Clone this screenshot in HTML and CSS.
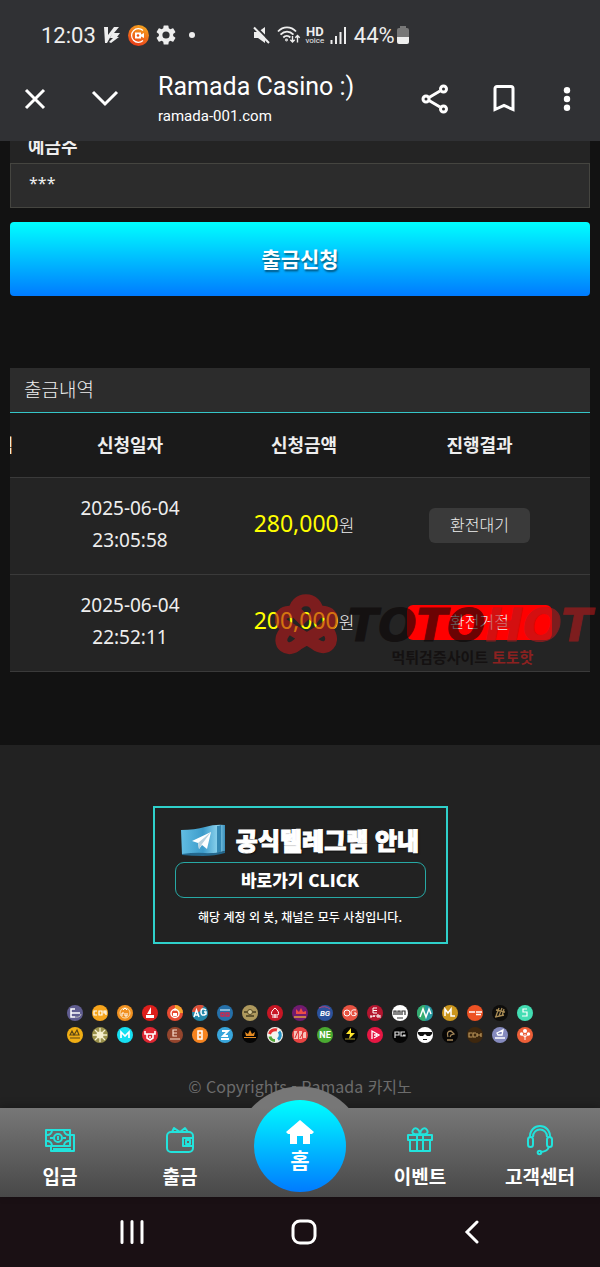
FILE: index.html
```html
<!DOCTYPE html>
<html lang="ko">
<head>
<meta charset="utf-8">
<meta name="viewport" content="width=device-width, initial-scale=1">
<title>Ramada Casino :)</title>
<link rel="stylesheet" href="styles.css">
</head>
<body>
<header class="browser">
  <div class="status">
    <span class="status-text">12:03</span>
    <svg class="status-v" width="17" height="18" viewBox="0 0 17 18" fill="#eee"><path d="M0 1h4v8l6-8h5l-5 6h6l-3 4h2l-8 6-2-1 4-4H6l2-4-5 9H1z"/></svg>
    <svg class="status-rec" width="21" height="21" viewBox="0 0 21 21"><defs><linearGradient id="rec" x1="0.7" y1="0" x2="0.3" y2="1"><stop offset="0" stop-color="#f5a51d"/><stop offset="1" stop-color="#e93a1a"/></linearGradient></defs><circle cx="10.500" cy="10.500" r="10.500" fill="url(#rec)"/><path d="M15 5.500A6.800 6.800 0 1 0 15 15.500" fill="none" stroke="#fff" stroke-width="1.200"/><path d="M7 7.500h6v2l3-1.500v5l-3-1.500v2H7z" fill="#fff"/><circle cx="10" cy="10.500" r="1.300" fill="#e8501a"/></svg>
    <svg class="status-gear" width="20" height="20" viewBox="2 2 20 20" fill="#eee"><path d="M19.140 12.940c.04-.3.06-.61.06-.94s-.02-.64-.07-.94l2.030-1.580a.5.5 0 0 0 .12-.61l-1.920-3.320a.49.49 0 0 0-.59-.22l-2.390.96a7 7 0 0 0-1.620-.94L14.400 2.810a.48.48 0 0 0-.48-.41h-3.840a.47.47 0 0 0-.47.41l-.36 2.540c-.59.24-1.130.57-1.620.94l-2.390-.96a.48.48 0 0 0-.59.22L2.740 8.870a.47.47 0 0 0 .12.61l2.030 1.580a7 7 0 0 0 0 1.880l-2.030 1.580a.5.5 0 0 0-.12.61l1.920 3.320c.12.22.37.29.59.22l2.390-.96c.5.38 1.030.7 1.620.94l.36 2.540c.05.24.24.41.48.41h3.840c.24 0 .44-.17.47-.41l.36-2.540a7 7 0 0 0 1.620-.94l2.390.96c.22.08.47 0 .59-.22l1.920-3.320a.47.47 0 0 0-.12-.61zM12 15.600A3.600 3.600 0 1 1 12 8.400a3.600 3.600 0 0 1 0 7.200z"/></svg>
    <svg class="status-dot" width="6" height="6" viewBox="0 0 6 6"><circle cx="3" cy="3" r="3" fill="#eee"/></svg>
    <svg class="status-mute" width="18" height="18" viewBox="0 0 18 18"><path d="M1 6h4l7-5v16l-7-5H1z" fill="#eee"/><path d="M2 0l16 16" stroke="#303134" stroke-width="2"/><path d="M1 1.500L16 17" stroke="#eee" stroke-width="2"/></svg>
    <svg class="status-wifi" width="24" height="18" viewBox="0 0 24 18" fill="none" stroke="#eee" stroke-width="1.800"><path d="M1 5.500c5-5.500 13-5.500 18 0M3.500 8.700c4-4 9-4 13 0M6.300 11.500c2-2 5-2 7 0"/><circle cx="9.500" cy="14" r="0.500"/><path d="M15.500 10v6M13.300 13.800l2.200 2.200 2.200-2.200M20.500 16.500v-7M18.300 11.700l2.200-2.200 2.200 2.200" stroke-width="1.400"/></svg>
    <span class="hd"><b>HD</b><small>voice</small></span>
    <svg class="status-signal" width="16" height="17" viewBox="0 0 16 17" stroke="#eee" stroke-width="2"><path d="M1.500 17v-4M6 17V9M10.500 17V5M15 17V0"/></svg>
    <span class="status-text">44%</span>
    <svg class="status-battery" width="12" height="18" viewBox="0 0 12 18"><path d="M3 0h6v2h1a2 2 0 0 1 2 2v8H0V4a2 2 0 0 1 2-2h1z" fill="#777"/><path d="M0 11h12v5a2 2 0 0 1-2 2H2a2 2 0 0 1-2-2z" fill="#eee"/></svg>
  </div>
  <div class="toolbar">
    <button class="tool close" aria-label="닫기"><svg width="22" height="22" viewBox="0 0 22 22"><path d="M2 2l18 18M20 2L2 20"/></svg></button>
    <button class="tool collapse" aria-label="접기"><svg width="28" height="18" viewBox="0 0 28 18"><path d="M2 2l12 12L26 2"/></svg></button>
    <div class="site">
      <div class="site-title">Ramada Casino :)</div>
      <div class="site-url">ramada-001.com</div>
    </div>
    <button class="tool share" aria-label="공유"><svg width="28" height="30" viewBox="0 0 28 30"><path d="M8 13.500L19 7M8 16.500L19 23"/><circle cx="5" cy="15" r="3"/><circle cx="22.500" cy="5" r="3"/><circle cx="22.500" cy="25" r="3"/></svg></button>
    <button class="tool bookmark" aria-label="북마크"><svg width="22" height="27" viewBox="0 0 22 27"><path d="M2 24.500V3.500a2 2 0 0 1 2-2h14a2 2 0 0 1 2 2v21l-9-4z"/></svg></button>
    <button class="tool more" aria-label="더보기"><svg width="8" height="24" viewBox="0 0 8 24"><g fill="#fff" stroke="none"><circle cx="4" cy="3.200" r="3.200"/><circle cx="4" cy="12" r="3.200"/><circle cx="4" cy="20.800" r="3.200"/></g></svg></button>
  </div>
</header>

<main class="content">
  <form class="withdraw">
    <div class="field-head"><label for="holder">예금주</label></div>
    <input class="field" id="holder" type="text" value="***" readonly>
    <button class="submit" type="button">출금신청</button>
  </form>

  <section class="history">
    <h2 class="history-title">출금내역</h2>
    <table class="history-table">
      <colgroup><col class="col-edge"><col class="col-main"><col class="col-main"><col></colgroup>
      <thead>
        <tr><th><span class="cut">내역</span></th><th>신청일자</th><th>신청금액</th><th>진행결과</th></tr>
      </thead>
      <tbody>
        <tr><td></td><td>2025-06-04<br>23:05:58</td><td><span class="amount">280,000</span><span class="won">원</span></td><td><span class="state">환전대기</span></td></tr>
        <tr><td></td><td>2025-06-04<br>22:52:11</td><td><span class="amount">200,000</span><span class="won">원</span></td><td><span class="state rejected">환전거절</span></td></tr>
      </tbody>
    </table>
    <div class="watermark">
      <svg width="62" height="62" viewBox="0 0 62 62" fill="none" stroke="#b8191b"><path stroke-width="12" d="M20 19C18 2 44 2 42 19L36 27M42 19c14-5 20 8 10 14L23 50C13 60 1 50 9 39l6-9M20 19C8 14-1 26 11 32l29 18c12 9 21-3 13-13l-7-8M21 18l10 10"/></svg>
      <div class="watermark-text">
        <div class="watermark-name">TOTO<em>HOT</em></div>
        <div class="watermark-sub">먹튀검증사이트 <em>토토핫</em></div>
      </div>
    </div>
  </section>
</main>

<footer class="footer">
  <div class="banner">
    <div class="banner-title">
      <svg width="45" height="32" viewBox="0 0 45 32"><defs><linearGradient id="flag"><stop offset="0" stop-color="#62bde3"/><stop offset="0.5" stop-color="#3d9ccb"/><stop offset="0.85" stop-color="#8ed4ee"/><stop offset="1" stop-color="#388db9"/></linearGradient></defs><path d="M0 6Q14 6 24 3T44 1v26q-10 3-22 3T1 31z" fill="url(#flag)"/><path d="M36 2q3 0 4-1v27l-4 1z" fill="#3387b2"/><path d="M1 30q14-2 23-1t20-2v2q-10 3-22 3T1 31z" fill="#24688e"/><path d="M11 17L30 8l-4 17-5-4-3 4-1-6z" fill="#fff"/><path d="M17 19L30 8l-9 12-3 5z" fill="#b9d2df"/></svg>
      <span>공식텔레그램 안내</span>
    </div>
    <button class="banner-link">바로가기 CLICK</button>
    <p class="banner-note">해당 계정 외 봇, 채널은 모두 사칭입니다.</p>
  </div>

  <div class="vendors">
    <svg viewBox="0 0 16 16"><circle cx="8" cy="8" r="8" fill="#605d90"/><path d="M8 4H4v8h4M4 8h9" stroke="#fff" stroke-width="1.500" fill="none"/><path d="M8 12q5 1 6-3" stroke="#bbb" fill="none"/></svg>
    <svg viewBox="0 0 16 16"><circle cx="8" cy="8" r="8" fill="#f7a51c"/><path d="M5 6H2v4h3M7 6h3v4H7zM14 10V6h-2v2h2" fill="none" stroke="#fff" stroke-width="1.200"/></svg>
    <svg viewBox="0 0 16 16"><circle cx="8" cy="8" r="8" fill="#f19120"/><circle cx="8" cy="8" r="5" fill="none" stroke="#fbe0b0"/><path d="M5 11V8h2M8 8v3h2V8M6 5l2-2 2 2" stroke="#fff" fill="none"/></svg>
    <svg viewBox="0 0 16 16"><circle cx="8" cy="8" r="8" fill="#de1f1c"/><path d="M9 2v7H5zM4 10h8v3H4z" fill="#fff"/></svg>
    <svg viewBox="0 0 16 16"><circle cx="8" cy="8" r="8" fill="#e84a31"/><path d="M8 0a8 8 0 0 1 8 8h-4L8 4z" fill="#f5a52c"/><circle cx="8" cy="8.500" r="4" fill="none" stroke="#fff" stroke-width="1.500"/><path d="M6 8h4v3H6zM7.500 3h1v3h-1z" fill="#fff"/></svg>
    <svg viewBox="0 0 16 16"><circle cx="8" cy="8" r="8" fill="#2488aa"/><path d="M0 7a8 8 0 0 1 12-6l-5 6z" fill="#df5038"/><path d="M2 12l2.500-7L7 12M3 10h3M14 5q-5-3-5 2t5 2V7h-2" fill="none" stroke="#fff" stroke-width="1.500"/></svg>
    <svg viewBox="0 0 16 16"><circle cx="8" cy="8" r="8" fill="#2570a9"/><path d="M3 5h10" stroke="#a9d1e8" stroke-width="1.500"/><path d="M4 8h3v3H4zM9 8h3v3H9z" fill="none" stroke="#d2254c" stroke-width="1.300"/></svg>
    <svg viewBox="0 0 16 16"><circle cx="8" cy="8" r="8" fill="#ae995d"/><path d="M2 7h12M4 11h8" stroke="#463c20" stroke-width="1.300"/><circle cx="8" cy="7" r="2.500" fill="#d7c996" stroke="#5a4b25"/></svg>
    <svg viewBox="0 0 16 16"><circle cx="8" cy="8" r="8" fill="#c71624"/><path d="M8 3q5 4 3 7H5Q3 7 8 3zM8 9v4M5 12h6" stroke="#fff" fill="none"/></svg>
    <svg viewBox="0 0 16 16"><circle cx="8" cy="8" r="8" fill="#711b70"/><path d="M4 9V4l3 3 2-4 2 4 3-1v3z" fill="#ed4c46"/><path d="M2 12h12" stroke="#e5a13a" stroke-width="1.500"/></svg>
    <svg viewBox="0 0 16 16"><circle cx="8" cy="8" r="8" fill="#2b529c"/><path d="M2 3q6-3 11 1" stroke="#b74276" fill="none"/><text x="8" y="11" font-size="8" font-style="italic">BG</text></svg>
    <svg viewBox="0 0 16 16"><circle cx="8" cy="8" r="8" fill="#e85342"/><circle cx="5" cy="8" r="3" fill="none" stroke="#fff"/><path d="M14 5q-5-1-5 3t5 2V8h-2" fill="none" stroke="#fff"/></svg>
    <svg viewBox="0 0 16 16"><circle cx="8" cy="8" r="8" fill="#b5152f"/><path d="M10 3H6v5h4M6 5.500h4M3 11h2v1H3M6 10l1 2 1-2M10 10h2v2h-2zM13 10v3" fill="none" stroke="#fff"/></svg>
    <svg viewBox="0 0 16 16"><circle cx="8" cy="8" r="8" fill="#fff"/><path d="M2 10V6h2v4M6 10V6h2v4M10 10V6h3v4M5 13h6" stroke="#333" fill="none" stroke-width="1.200"/></svg>
    <svg viewBox="0 0 16 16"><circle cx="8" cy="8" r="8" fill="#2799a0"/><path d="M0 8a8 8 0 0 1 8-8v16a8 8 0 0 1-8-8z" fill="#35ad6f"/><path d="M3 12L6 4l3 8 3-8 2 5" stroke="#fff" stroke-width="1.500" fill="none"/></svg>
    <svg viewBox="0 0 16 16"><circle cx="8" cy="8" r="8" fill="#cb961d"/><path d="M3 11V4l3 4 3-4v7h4" stroke="#fff" stroke-width="1.500" fill="none"/></svg>
    <svg viewBox="0 0 16 16"><circle cx="8" cy="8" r="8" fill="#ed5224"/><path d="M2 7h6M9 7h6M9 9.500h5" stroke="#fff" stroke-width="1.400"/></svg>
    <svg viewBox="0 0 16 16"><circle cx="8" cy="8" r="8" fill="#0e0d0b"/><path d="M4 11l3-8M7 11l3-8M10 11l2-7M4 5l9 2M3 12l9-2" stroke="#a98c55" stroke-width="1.300"/></svg>
    <svg viewBox="0 0 16 16"><circle cx="8" cy="8" r="8" fill="#43ddb3"/><path d="M10 4H6v3h4v4H5" stroke="#fff" stroke-width="1.200" fill="none"/></svg>

    <svg viewBox="0 0 16 16"><circle cx="8" cy="8" r="8" fill="#f0ae14"/><path d="M3 8l2-4 2 4 3-5 2 5H4zM3 11h10" stroke="#594514" fill="none" stroke-width="1.200"/></svg>
    <svg viewBox="0 0 16 16"><circle cx="8" cy="8" r="8" fill="#9a914b"/><path d="M8 1v14M1 8h14M3 3l10 10M13 3L3 13" stroke="#f5efd1" stroke-width="1.300"/><circle cx="8" cy="8" r="3.500" fill="#f6efce"/></svg>
    <svg viewBox="0 0 16 16"><circle cx="8" cy="8" r="8" fill="#16dff1"/><path d="M4 11V5l4 4 4-4v6" stroke="#fff" stroke-width="1.700" fill="none"/></svg>
    <svg viewBox="0 0 16 16"><circle cx="8" cy="8" r="8" fill="#df2732"/><path d="M3 4v3h10V4M5 7v4l3 2 3-2V7M7 10h2" fill="none" stroke="#fff" stroke-width="1.600"/></svg>
    <svg viewBox="0 0 16 16"><circle cx="8" cy="8" r="8" fill="#94452d"/><path d="M10 3H6v6h4M6 6h4M3 12h10" stroke="#f8ddce" stroke-width="1.200" fill="none"/></svg>
    <svg viewBox="0 0 16 16"><circle cx="8" cy="8" r="8" fill="#f68420"/><path d="M6 4h4v8H6z" stroke="#fff" stroke-width="1.500" fill="none"/><circle cx="8" cy="8" r="1" fill="#fff"/></svg>
    <svg viewBox="0 0 16 16"><circle cx="8" cy="8" r="8" fill="#39a6dc"/><path d="M5 4h6L6 9h5M4 12h8" stroke="#fff" stroke-width="1.800" fill="none"/></svg>
    <svg viewBox="0 0 16 16"><circle cx="8" cy="8" r="8" fill="#050505"/><path d="M3 5l3 2 2-4 2 4 3-2-1 4H4zM2 10h12v1H2z" fill="#e58b22"/></svg>
    <svg viewBox="0 0 16 16"><circle cx="8" cy="8" r="8" fill="#f4f4ed"/><path d="M2.500 7A6 6 0 0 1 10 3" stroke="#e73131" stroke-width="3" fill="none"/><path d="M12 4.500a5.500 5.500 0 0 1-1 8" stroke="#2794c8" stroke-width="3" fill="none"/><path d="M3 9.500q1 4 5 4" stroke="#51a536" stroke-width="3" fill="none"/></svg>
    <svg viewBox="0 0 16 16"><circle cx="8" cy="8" r="8" fill="#e94442"/><path d="M2 4h4v8H2zM7 4h3v8H7zM11 5h3v6h-3z" fill="#f7c1b9"/><path d="M3 11l3-7M8 11l4-7" stroke="#d52b30"/></svg>
    <svg viewBox="0 0 16 16"><circle cx="8" cy="8" r="8" fill="#4aaa31"/><text x="8" y="11" font-size="9">NE</text></svg>
    <svg viewBox="0 0 16 16"><circle cx="8" cy="8" r="8" fill="#050505"/><path d="M9 1L4 7h4l-1 5 6-6H9z" fill="#ffe52c"/><path d="M3 12h10" stroke="#a7992a"/></svg>
    <svg viewBox="0 0 16 16"><circle cx="8" cy="8" r="8" fill="#e61743"/><path d="M5 12V4l7 4-5 3M7 8h3" stroke="#fff" stroke-width="1.300" fill="none"/></svg>
    <svg viewBox="0 0 16 16"><circle cx="8" cy="8" r="8" fill="#050505"/><path d="M3 11V5h4v3H3M13 5H9v4h4V8h-2" stroke="#ddd" stroke-width="1.200" fill="none"/></svg>
    <svg viewBox="0 0 16 16"><circle cx="8" cy="8" r="8" fill="#fff"/><path d="M1 5h14v2l-2 2h-3L8 7 6 9H3L1 7zM6 12h4v1H6z" fill="#111"/></svg>
    <svg viewBox="0 0 16 16"><circle cx="8" cy="8" r="8" fill="#080706"/><path d="M6 10Q4 4 9 4l3 3-3 1-1 2M5 13h6" stroke="#a28558" stroke-width="1.300" fill="none"/></svg>
    <svg viewBox="0 0 16 16"><circle cx="8" cy="8" r="8" fill="#3e270e"/><path d="M5 6H2v4h3M9 6H6v4h3M10 6v4M14 6v4M10 8h4" stroke="#bd975b" stroke-width="1.200" fill="none"/></svg>
    <svg viewBox="0 0 16 16"><circle cx="8" cy="8" r="8" fill="#858abe"/><path d="M5 6l6-3-1 5H6zM3 11h10" stroke="#fff" stroke-width="1.300" fill="none"/></svg>
    <svg viewBox="0 0 16 16"><circle cx="8" cy="8" r="8" fill="#ed5f38"/><path d="M8 13V7M8 10L4 7M8 10l4-3" stroke="#fff"/><circle cx="8" cy="4" r="2" fill="#fff"/><circle cx="4.500" cy="7" r="1.700" fill="#fff"/><circle cx="11.500" cy="7" r="1.700" fill="#fff"/></svg>
  </div>
  <p class="copyright">© Copyrights - Ramada 카지노</p>
</footer>

<nav class="tabs">
  <a class="tab" href="#"><svg width="32" height="26" viewBox="0 0 32 26"><path d="M2 3h24v16H2zM27 8h3v16H7v-4"/><circle cx="14" cy="11" r="4"/><path d="M14 9v4M3 8q4 0 5-4M20 4q1 4 5 4M3 14q4 0 5 4M20 18q1-4 5-4M9 22h18M6 11h3M19 11h3"/></svg><span>입금</span></a>
  <a class="tab" href="#"><svg width="30" height="28" viewBox="0 0 30 28"><rect x="2" y="6" width="26" height="20" rx="4"/><path d="M7 6l2-4 6 4 5-4 3 4M27 12h-9v8h9M21 14h4v4h-4z"/></svg><span>출금</span></a>
  <a class="home" href="#"><svg width="28" height="24" viewBox="0 0 28 24"><path d="M14 0l14 12-2 2h-2v10h-7v-8h-6v8H4V14H2l-2-2z" fill="#fff"/></svg><span>홈</span></a>
  <a class="tab" href="#"><svg width="28" height="28" viewBox="0 0 28 28"><path d="M2 9h24v5H2zM4 14v11h20V14M11 9v16M17 9v16"/><path d="M14 8C8 9 5 7 7 4s6-2 7 4zM14 8c6 1 9-1 7-4s-6-2-7 4z"/></svg><span>이벤트</span></a>
  <a class="tab" href="#"><svg width="28" height="32" viewBox="0 0 28 32"><path d="M4 14C3-2 25-2 24 14M7 13C7 3 21 3 21 13"/><rect x="2" y="13" width="5" height="10" rx="2.500"/><rect x="21" y="13" width="5" height="10" rx="2.500"/><path d="M23 23q-2 5-9 5"/><circle cx="13.500" cy="28.500" r="1.800"/></svg><span>고객센터</span></a>
</nav>

<div class="system">
  <button aria-label="최근 앱"><svg width="24" height="24" viewBox="0 0 24 24"><path d="M2 1.500v21M12 1.500v21M22 1.500v21"/></svg></button>
  <button aria-label="홈 화면"><svg width="26" height="26" viewBox="0 0 26 26"><rect x="2" y="2" width="22" height="22" rx="7"/></svg></button>
  <button aria-label="뒤로"><svg width="16" height="24" viewBox="0 0 16 24"><path d="M13 2L3 12l10 10"/></svg></button>
</div>
</body>
</html>
```
FILE: styles.css
```css
* { box-sizing: border-box; }

body {
  margin: 0;
  min-height: 100vh;
  background: #121212;
  color: #eee;
  font-family: "Noto Sans", "Noto Sans CJK KR", sans-serif;
}

button {
  padding: 0;
  border: 0;
  background: none;
  color: inherit;
  font-family: inherit;
}

svg { flex: none; display: block; }
em { font-style: inherit; }

/* Browser chrome */
.browser {
  background: #303134;
  font-family: Roboto, sans-serif;
  padding: 19px 29px 0 24px;
}

.status {
  display: flex;
  align-items: center;
  height: 32px;
  padding-left: 17px;
}

.status-text { font-size: 22px; color: #eee; }
.status-v { margin-left: 8px; }
.status-rec { margin-left: 7px; }
.status-gear { margin-left: 7px; }
.status-dot { margin-left: 13px; }
.status-mute { margin-left: 58px; }
.status-wifi { margin-left: 6px; }
.status-signal { margin: 0 8px 0 5px; }
.status-battery { margin-left: 2px; }

.hd {
  display: flex;
  flex-direction: column;
  align-items: center;
  width: 20px;
  margin-left: 4px;
}
.hd b { font-size: 13px; line-height: 10px; }
.hd small { font-size: 8px; line-height: 7px; }

.toolbar {
  display: flex;
  align-items: center;
  height: 90px;
  padding-top: 5px;
}

.tool { flex: none; }
.tool svg {
  fill: none;
  stroke: #fff;
  stroke-width: 3;
}
.collapse { margin-left: 45px; }
.site { flex: 1; margin-left: 39px; padding-top: 3px; color: #fff; }
.site-title { font-size: 25px; line-height: 32px; }
.site-url { font-size: 15px; line-height: 26px; }
.bookmark { margin-left: 44px; }
.more { margin-left: 48px; }

/* Withdrawal form */
.content { padding: 0 10px 73px; }

.field-head {
  display: flex;
  align-items: flex-end;
  height: 22px;
  padding-left: 18px;
  overflow: hidden;
  background: #242424;
  font-size: 18px;
  font-weight: 700;
  line-height: 34px;
}

.field {
  display: block;
  width: 100%;
  height: 45px;
  padding: 0 18px 6px;
  border: 1px solid #454540;
  background: #2c2c2c;
  color: #eee;
  font-family: inherit;
  font-size: 16px;
}

.submit {
  display: block;
  width: 100%;
  height: 74px;
  margin-top: 14px;
  padding-bottom: 2px;
  border-radius: 4px;
  background: linear-gradient(#00ffff, #007bff);
  color: #fff;
  font-size: 21px;
  font-weight: 700;
  text-shadow: 1px 2px 2px rgba(0, 0, 0, 0.5);
}

/* History */
.history { position: relative; margin-top: 72px; }

.history-title {
  margin: 0;
  padding-left: 14px;
  border-bottom: 1px solid #35c6c8;
  background: #2c2c2c;
  font-size: 19px;
  font-weight: 300;
  line-height: 44px;
}

.history-table {
  width: 100%;
  table-layout: fixed;
  border-collapse: collapse;
  font-size: 19px;
  line-height: 32px;
  text-align: center;
}
.history-table th, .history-table td {
  padding: 0;
  border-bottom: 1px solid #3a3a3a;
}
.history-table th {
  height: 64px;
  background: #1a1a1a;
  font-size: 18px;
}
.history-table td {
  height: 97px;
  padding-bottom: 3px;
  background: #242424;
}
.history-table tr > :last-child { padding-right: 22px; padding-bottom: 0; }
.col-edge { width: 33px; }
.col-main { width: 30%; }

.cut {
  display: flex;
  justify-content: flex-end;
  width: 3px;
  overflow: hidden;
  white-space: nowrap;
}

.amount { color: #ff0; font-size: 23px; }
.won { font-size: 17px; font-weight: 300; }

.state {
  display: inline-block;
  padding: 0 21px;
  border-radius: 6px;
  background: #3a3a3a;
  font-size: 16px;
  font-weight: 300;
  line-height: 35px;
}
.rejected { padding: 0 43px; background: #f00; }

.watermark {
  position: absolute;
  right: -2px;
  bottom: -8px;
  display: flex;
  align-items: center;
  gap: 10px;
  opacity: 0.6;
  pointer-events: none;
}
.watermark svg { margin-bottom: 24px; }
.watermark-name {
  color: #0a0505;
  font: italic 700 45px/40px "DejaVu Sans", sans-serif;
  -webkit-text-stroke: 1px;
}
.watermark-name em { color: #b8191b; }
.watermark-sub {
  padding-left: 44px;
  color: #0a0505;
  font-size: 15px;
  font-weight: 700;
  line-height: 22px;
}
.watermark-sub em { color: #d0201f; }

/* Footer */
.footer {
  display: flex;
  flex-direction: column;
  align-items: center;
  padding: 61px 10px 10px;
  background: #222;
}

.banner {
  display: flex;
  flex-direction: column;
  align-items: center;
  width: 295px;
  padding: 14px 20px;
  border: 2px solid #2fd0cb;
  font-family: "Noto Sans CJK KR", sans-serif;
  color: #fff;
}
.banner-title {
  display: flex;
  align-items: center;
  gap: 10px;
  font-size: 24px;
  font-weight: 900;
  line-height: 36px;
  white-space: nowrap;
  text-shadow: 1px 1px 2px #000;
  -webkit-text-stroke: 1px;
}
.banner-link {
  width: 100%;
  height: 36px;
  margin-top: 4px;
  border: 1px solid #27a9a5;
  border-radius: 9px;
  font-size: 17px;
  font-weight: 900;
  line-height: 24px;
}
.banner-note {
  margin: 8px 0 0;
  font-size: 12px;
  font-weight: 500;
  line-height: 22px;
  white-space: nowrap;
}

.vendors {
  display: grid;
  grid-template-columns: repeat(19, 16px);
  gap: 6px 9px;
  margin-top: 61px;
}
.vendors svg { width: 16px; height: 16px; }
.vendors text {
  fill: #fff;
  font-family: Roboto, sans-serif;
  font-weight: 700;
  text-anchor: middle;
}

.copyright {
  margin: 31px 0 0;
  color: #6c6c6c;
  font-family: "Noto Sans CJK KR", sans-serif;
  font-size: 16px;
  line-height: 24px;
}

/* Tab bar */
.tabs {
  position: relative;
  display: grid;
  grid-template-columns: repeat(5, 1fr);
  height: 89px;
  background: linear-gradient(#777, #484848);
  box-shadow: 0 -2px 8px rgba(0, 0, 0, 0.25);
}
.tabs::before {
  content: "";
  position: absolute;
  left: 50%;
  bottom: 100%;
  width: 100px;
  height: 22px;
  margin-left: -50px;
  background: radial-gradient(circle at 50% 66px, #777 65px, transparent 66px);
}
.tab {
  display: flex;
  flex-direction: column;
  align-items: center;
  justify-content: space-between;
  padding: 10px 0 6px;
  color: #fff;
  font-size: 19px;
  font-weight: 700;
  line-height: 28px;
  text-decoration: none;
}
.tab svg {
  margin: auto 0;
  fill: none;
  stroke: #22e3dc;
  stroke-width: 2;
  stroke-linejoin: round;
}
.home {
  position: relative;
  display: flex;
  flex-direction: column;
  align-items: center;
  justify-self: center;
  width: 92px;
  height: 92px;
  margin-top: -8px;
  padding-top: 20px;
  border-radius: 50%;
  background: linear-gradient(#00ffff, #007bff);
  color: #fff;
  font-size: 21px;
  font-weight: 700;
  line-height: 32px;
  text-decoration: none;
}

/* System navigation */
.system {
  display: flex;
  align-items: center;
  justify-content: space-between;
  height: 70px;
  padding: 0 20%;
  background: #1a1014;
}
.system svg {
  fill: none;
  stroke: #fff;
  stroke-width: 3;
  stroke-linecap: round;
}
```
